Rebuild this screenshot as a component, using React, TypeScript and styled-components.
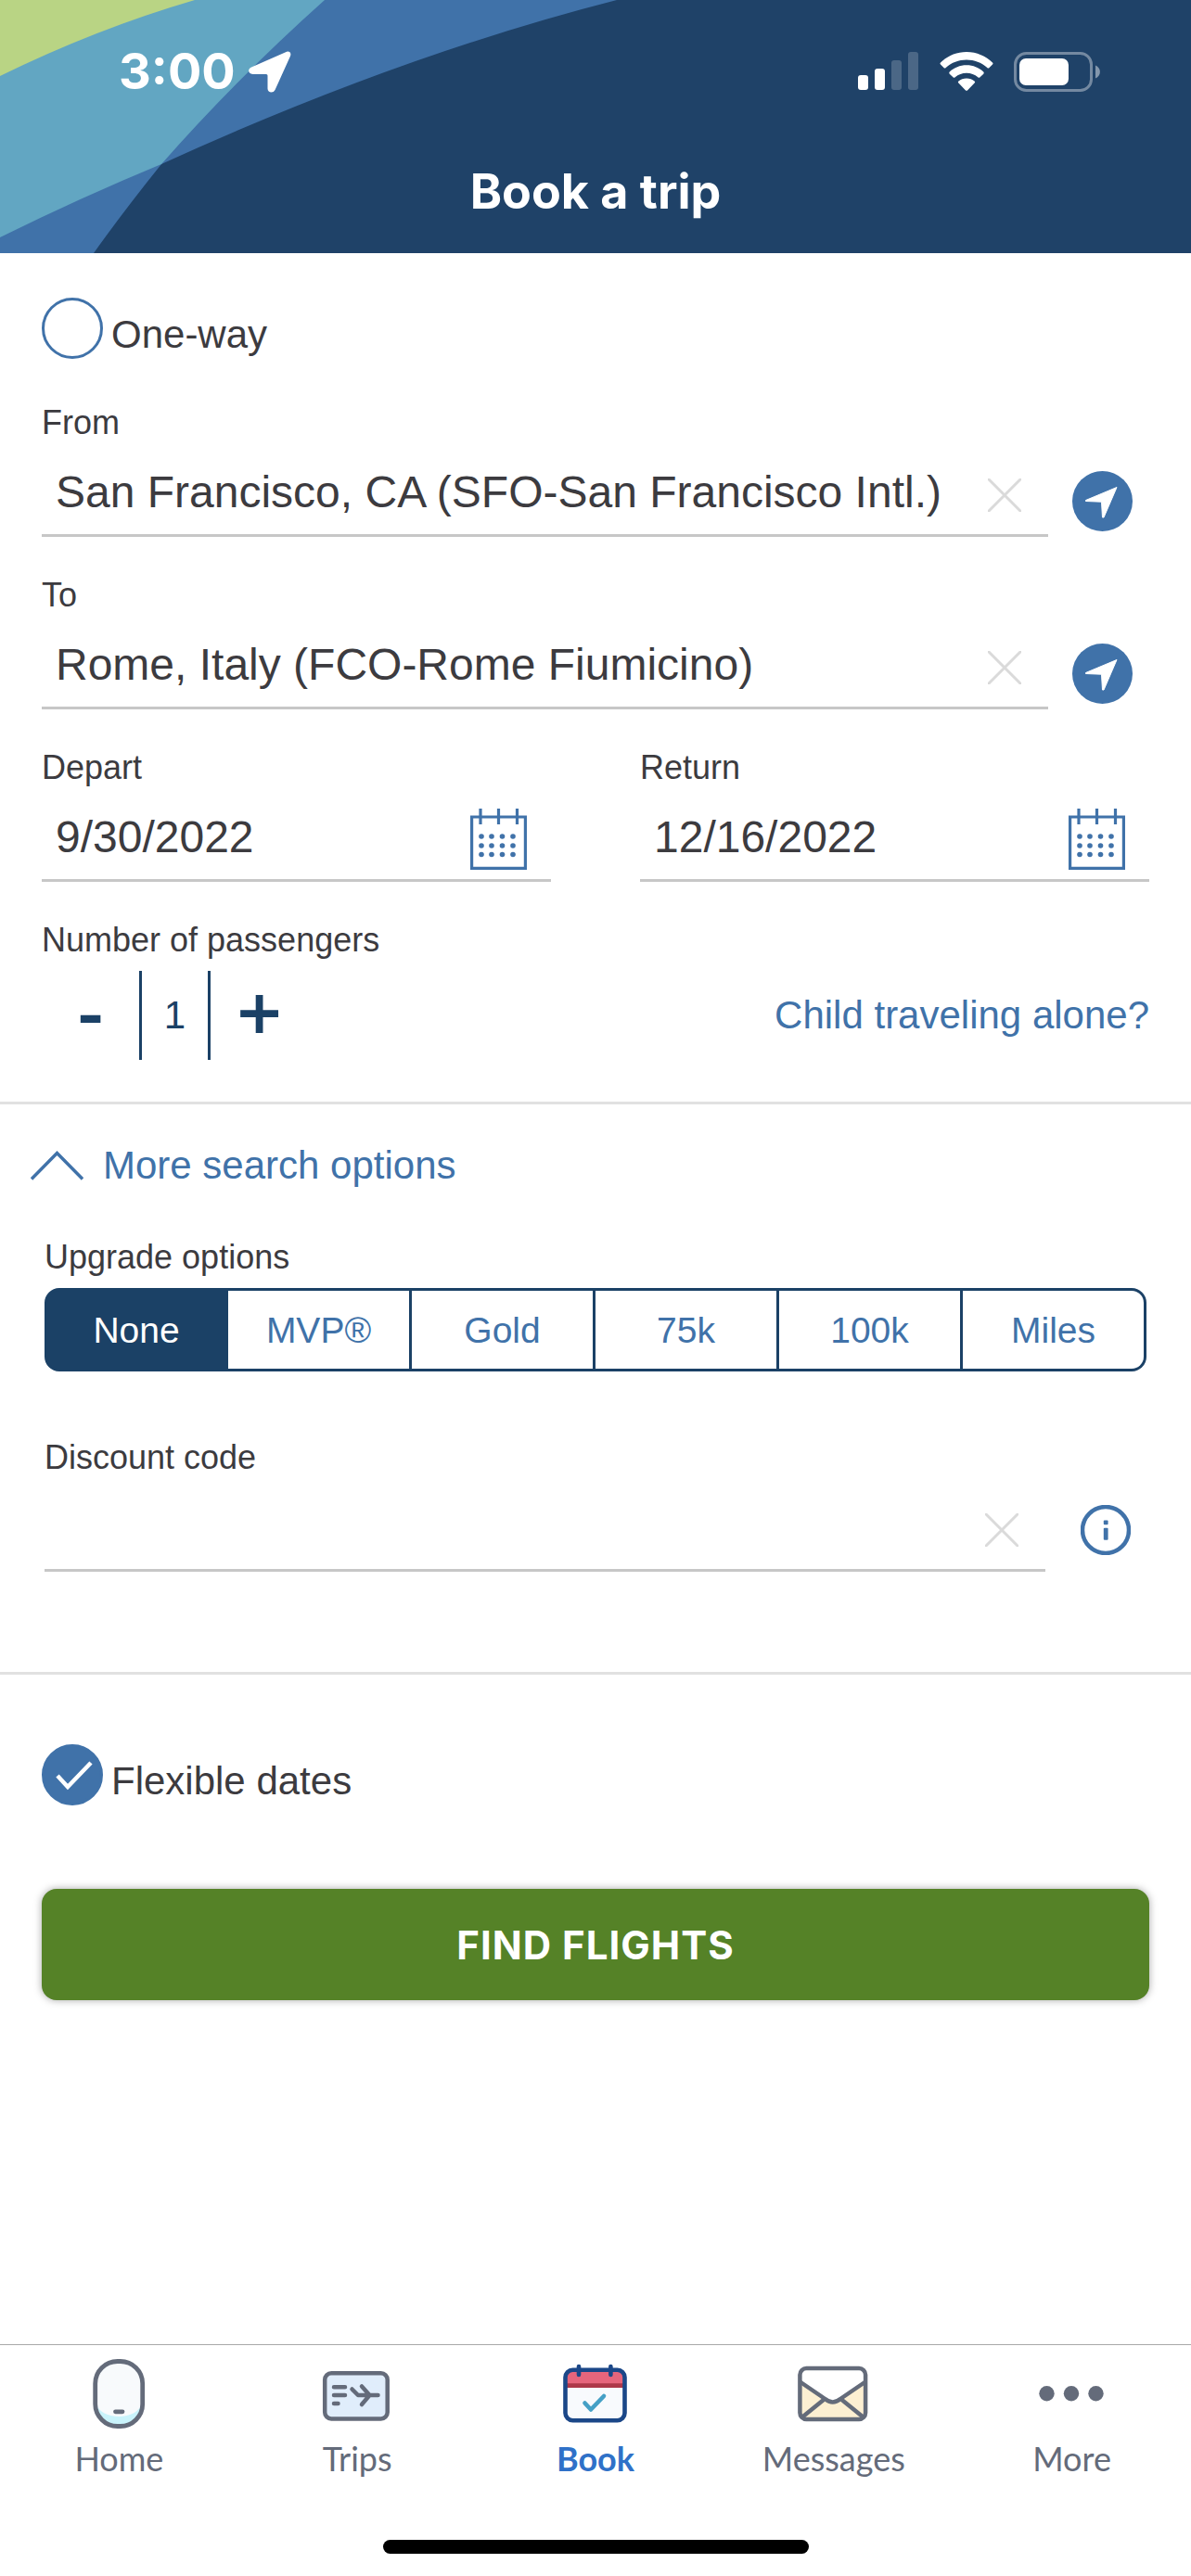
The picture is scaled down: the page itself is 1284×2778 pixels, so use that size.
import React, { useState } from "react";
import styled, { createGlobalStyle } from "styled-components";

const color = {
  navy: "#1f4268",
  deep: "#1b4166",
  blue: "#4072a9",
  teal: "#62a6c2",
  lime: "#b9d484",
  text: "#3c3b3f",
  line: "#c7c7c7",
  rule: "#e1e1e1",
  green: "#558227",
  slate: "#646b7a",
  active: "#2f71c8",
};

const sans = `"Liberation Sans", Arial, sans-serif`;
const ui = `Inter, Roboto, sans-serif`;
const geometric = `Lato, Inter, sans-serif`;

const GlobalStyle = createGlobalStyle`
  *, *::before, *::after { box-sizing: border-box; }
  body { margin: 0; background: #fff; color: ${color.text}; font-family: ${sans}; }
  button, input { font: inherit; color: inherit; }
  button { border: 0; padding: 0; background: none; cursor: pointer; }
  svg { display: block; flex: none; }
`;

const Page = styled.div`
  display: flex;
  flex-direction: column;
  min-height: 100vh;
`;

/* ---------- header ---------- */

const Header = styled.header`
  position: relative;
  height: 273px;
  overflow: hidden;
  background: ${color.navy};
  color: #fff;
  font-family: ${ui};
`;

const Swoosh = styled.svg`
  position: absolute;
  inset: 0 auto auto 0;
`;

const HeaderContent = styled.div`
  position: relative;
  display: flex;
  flex-direction: column;
`;

const StatusBar = styled.div`
  display: flex;
  align-items: center;
  justify-content: space-between;
  height: 154px;
  padding: 0 96px 0 128px;
`;

const StatusGroup = styled.div<{ $gap: number }>`
  display: flex;
  align-items: center;
  gap: ${(p) => p.$gap}px;
`;

const Clock = styled.time`
  font-size: 54px;
  line-height: 64px;
  font-weight: 700;
`;

const Title = styled.h1`
  margin: 0;
  padding-top: 22px;
  font-size: 52px;
  line-height: 62px;
  font-weight: 700;
  text-align: center;
`;

/* ---------- form ---------- */

const Form = styled.form`
  flex: 1;
`;

const TripSection = styled.section`
  padding: 48px 45px 45px;
  border-bottom: 3px solid ${color.rule};
`;

const OptionsSection = styled.section`
  padding: 42px 48px 108px;
  border-bottom: 3px solid ${color.rule};
`;

const SubmitSection = styled.section`
  padding: 75px 45px;
`;

const CheckLabel = styled.label`
  display: flex;
  align-items: center;
  gap: 9px;
  width: fit-content;
  font-size: 42px;
  line-height: 48px;
`;

const CheckText = styled.span`
  padding-top: 14px;
`;

const CheckBox = styled.span`
  display: grid;
  & > * {
    grid-area: 1 / 1;
  }
`;

const CheckInput = styled.input`
  appearance: none;
  width: 66px;
  height: 66px;
  margin: 0;
  border: 3px solid ${color.blue};
  border-radius: 50%;
  &:checked {
    background: ${color.blue};
  }
`;

const FieldStack = styled.div`
  display: flex;
  flex-direction: column;
  gap: 42px;
  margin-top: 48px;
`;

const FieldPair = styled.div`
  display: grid;
  grid-template-columns: 1fr 1fr;
  gap: 96px;
`;

const Field = styled.div`
  display: flex;
  flex-direction: column;
  min-width: 0;
`;

const FieldLabel = styled.label`
  font-size: 36px;
  line-height: 42px;
`;

const FieldRow = styled.div`
  display: flex;
  align-items: flex-end;
`;

const InputLine = styled.div<{ $end: number }>`
  flex: 1;
  min-width: 0;
  display: flex;
  align-items: flex-end;
  height: 102px;
  padding: 0 ${(p) => p.$end}px 0 15px;
  border-bottom: 3px solid ${color.line};
`;

const TextInput = styled.input`
  flex: 1;
  min-width: 0;
  height: 99px;
  padding: 8px 0 0;
  border: 0;
  outline: 0;
  background: transparent;
  font-size: 48px;
`;

const DateLine = styled(InputLine)`
  flex: none;
`;

const ClearButton = styled.button`
  margin-bottom: 24px;
`;

const CalendarButton = styled.button`
  margin-bottom: 10px;
`;

const LocateButton = styled.button`
  margin: 0 18px 6px 26px;
`;

const InfoButton = styled.button`
  margin: 0 17px 18px 38px;
`;

const PassengerRow = styled.div`
  display: flex;
  align-items: center;
  justify-content: space-between;
  margin-top: 12px;
  font-size: 42px;
`;

const Stepper = styled.div`
  display: flex;
  height: 96px;
  color: ${color.deep};
`;

const StepButton = styled.button`
  width: 105px;
  padding-bottom: 4px;
  font-size: 80px;
  line-height: 80px;
  -webkit-text-stroke: 2px ${color.deep};
`;

const StepValue = styled.output`
  display: grid;
  place-items: center;
  width: 77px;
  border: solid ${color.deep};
  border-width: 0 3px;
`;

const TextLink = styled.a`
  color: ${color.blue};
  text-decoration: none;
`;

const Disclosure = styled.button`
  display: flex;
  align-items: center;
  gap: 21px;
  margin-left: -15px;
  color: ${color.blue};
  font-size: 42px;
  line-height: 48px;
`;

const OptionGroup = styled.div`
  display: flex;
  flex-direction: column;
  gap: 12px;
  margin: 54px 0 72px;
`;

const Segments = styled.div`
  display: grid;
  grid-template-columns: repeat(6, 1fr);
  height: 90px;
`;

const Segment = styled.button<{ $on: boolean }>`
  padding-top: 2px;
  border: 3px solid ${color.deep};
  border-left-width: 0;
  background: ${(p) => (p.$on ? color.deep : "#fff")};
  color: ${(p) => (p.$on ? "#fff" : color.blue)};
  font-size: 39px;
  &:first-child {
    border-left-width: 3px;
    border-radius: 16px 0 0 16px;
  }
  &:last-child {
    border-radius: 0 16px 16px 0;
  }
`;

const SubmitButton = styled.button`
  width: 100%;
  height: 120px;
  margin-top: 90px;
  border-radius: 16px;
  background: ${color.green};
  box-shadow: 0 0 8px rgba(0, 0, 0, 0.35);
  color: #fff;
  font-family: ${ui};
  font-size: 42px;
  font-weight: 700;
  letter-spacing: 1px;
`;

/* ---------- tab bar ---------- */

const TabBar = styled.footer`
  border-top: 1px solid #a9a9a9;
  padding-bottom: 24px;
  font-family: ${geometric};
`;

const Tabs = styled.nav`
  display: grid;
  grid-template-columns: repeat(5, 1fr);
  padding: 15px 0 66px;
`;

const Tab = styled.a<{ $active?: boolean }>`
  display: flex;
  flex-direction: column;
  align-items: center;
  gap: 9px;
  color: ${(p) => (p.$active ? color.active : color.slate)};
  font-size: 36px;
  line-height: 44px;
  font-weight: ${(p) => (p.$active ? 700 : 400)};
  text-decoration: none;
`;

const HomeIndicator = styled.div`
  width: 459px;
  height: 15px;
  margin: 0 auto;
  border-radius: 8px;
  background: #000;
`;

/* ---------- icons ---------- */

const HeaderArt = () => (
  <Swoosh width="665" height="273" viewBox="0 0 665 273" aria-hidden="true">
    <path d="M0 0H665Q430 60 174 177Q87 213 0 256Z" fill={color.blue} />
    <path d="M0 0H350Q256 84 174 177Q133 228 101 273H0Z" fill={color.blue} />
    <path d="M0 0H350Q256 84 174 177Q87 213 0 256Z" fill={color.teal} />
    <path d="M0 0H210Q104 31 0 82Z" fill={color.lime} />
  </Swoosh>
);

const StatusArrow = () => (
  <svg width="46" height="45" viewBox="0 0 46 45" fill="#fff" aria-hidden="true">
    <path d="M40 1.200C43.500-.6 46.500 2 45 5.500L28.500 42C26.500 46 20.500 45 20.500 40.500V26.500Q20.500 25 19 25H4.500C-.5 25-1.500 19.500 3 17.500Z" />
  </svg>
);

const Signal = () => (
  <svg width="66" height="42" viewBox="0 0 66 42" fill="#fff" aria-hidden="true">
    <rect x="0" y="25" width="11" height="16" rx="3" />
    <rect x="18" y="18" width="11" height="23" rx="3" />
    <rect x="36" y="9" width="11" height="32" rx="3" opacity=".2" />
    <rect x="54" y="0" width="11" height="41" rx="3" opacity=".2" />
  </svg>
);

const Wifi = () => (
  <svg width="58" height="42" viewBox="0 0 58 42" fill="#fff" aria-hidden="true">
    <path d="M29 0C40 0 50 4.500 57 11.500Q58 12.500 57 13.600L53.500 17Q52.500 18 51.300 17C45 11.500 37.500 8.600 29 8.600S13 11.500 6.700 17Q5.500 18 4.500 17L1 13.600Q0 12.500 1 11.500C8 4.500 18 0 29 0Z" />
    <path d="M29 14.300C36 14.300 42.500 17 47.300 21.500Q48.300 22.600 47.300 23.700L43.500 27.300Q42.500 28.300 41.300 27.300C37.800 24.500 33.700 22.800 29 22.800S20.200 24.500 16.700 27.300Q15.500 28.300 14.500 27.300L10.700 23.700Q9.700 22.600 10.700 21.500C15.500 17 22 14.300 29 14.300Z" />
    <path d="M29 28.500C32.300 28.500 35.300 29.600 37.500 31.400Q38.700 32.500 37.600 33.600L30.200 41.200Q29 42.300 27.800 41.200L20.400 33.600Q19.300 32.500 20.500 31.400C22.700 29.600 25.700 28.500 29 28.500Z" />
  </svg>
);

const Battery = () => (
  <svg width="95" height="43" viewBox="0 0 95 43" fill="#fff" aria-hidden="true">
    <rect x="1.500" y="1.500" width="82" height="40" rx="12" fill="none" stroke="#fff" strokeWidth="3" opacity=".38" />
    <path d="M88 14.500C94.500 17 94.500 26 88 28.500Z" opacity=".45" />
    <rect x="6" y="7" width="53" height="29" rx="7" />
  </svg>
);

const CheckMark = () => (
  <svg width="66" height="66" viewBox="0 0 66 66" fill="none" stroke="#fff" strokeWidth="4.500" pointerEvents="none" aria-hidden="true">
    <path d="M17 34L28 46L53 20" />
  </svg>
);

const ClearIcon = () => (
  <svg width="36" height="36" viewBox="0 0 36 36" stroke="#dadada" strokeWidth="3" aria-hidden="true">
    <path d="M0 0L36 36M36 0L0 36" />
  </svg>
);

const LocateIcon = () => (
  <svg width="65" height="65" viewBox="0 0 65 65" aria-hidden="true">
    <circle cx="32.500" cy="32.500" r="32.500" fill={color.blue} />
    <path d="M14.500 31.500L48 17.500L34 50H32.500L31.500 33.200L14.500 32.500Z" fill="#fff" stroke="#fff" strokeLinejoin="round" />
  </svg>
);

const CalendarIcon = () => (
  <svg width="61" height="66" viewBox="0 0 61 66" fill="none" stroke={color.blue} strokeWidth="3.200" aria-hidden="true">
    <path d="M1.600 9H59.400V64.400H1.600ZM11 0V17M30.500 0V17M50.500 0V17" />
    {[30, 40, 49.5].map((y) =>
      [12, 23, 34.5, 46].map((x) => (
        <circle key={`${x}-${y}`} cx={x} cy={y} r="2.800" fill={color.blue} stroke="none" />
      ))
    )}
  </svg>
);

const ChevronIcon = () => (
  <svg width="57" height="32" viewBox="0 0 57 32" fill="none" stroke={color.blue} strokeWidth="3.500" aria-hidden="true">
    <path d="M1 30.500L28.500 2.500L56 30.500" />
  </svg>
);

const InfoIcon = () => (
  <svg width="54" height="54" viewBox="0 0 54 54" fill={color.blue} aria-hidden="true">
    <circle cx="27" cy="27" r="25" fill="none" stroke={color.blue} strokeWidth="4.500" />
    <rect x="24.800" y="16.500" width="4.800" height="4.800" rx="1" />
    <rect x="24.800" y="24.800" width="4.800" height="13" rx="1" />
  </svg>
);

const HomeIcon = () => (
  <svg width="96" height="76" viewBox="0 0 96 76" aria-hidden="true">
    <rect x="22.700" y="2.500" width="51" height="70" rx="24" fill="#c9f3fb" />
    <path d="M22.700 26.500A24 24 0 0 1 46.700 2.500H49.700A24 24 0 0 1 73.700 26.500V46C71 57 60 62 48.200 62S25.500 57 22.700 46Z" fill="#f8fafc" />
    <rect x="22.700" y="2.500" width="51" height="70" rx="24" fill="none" stroke={color.slate} strokeWidth="4.800" />
    <path d="M44.500 56.800H52" stroke={color.slate} strokeWidth="4.800" strokeLinecap="round" />
  </svg>
);

const TripsIcon = () => (
  <svg width="96" height="76" viewBox="0 0 96 76" fill="none" stroke={color.slate} strokeWidth="4.500" strokeLinecap="round" strokeLinejoin="round" aria-hidden="true">
    <rect x="13.200" y="15.300" width="67.500" height="49.200" rx="7" fill="#e0edfb" />
    <path d="M23 30.300H35M23 39H35M23 48H27.500" />
    <path d="M42.500 32.500L49 39H70.500M53 29.500L61.500 39L53 49" />
  </svg>
);

const BookIcon = () => (
  <svg width="96" height="76" viewBox="0 0 96 76" fill="none" strokeLinecap="round" strokeLinejoin="round" aria-hidden="true">
    <rect x="15.500" y="11.700" width="64" height="54.500" rx="8" fill="#f8fafd" />
    <path d="M15.500 27V19.700A8 8 0 0 1 23.500 11.700H71.500A8 8 0 0 1 79.500 19.700V27Z" fill="#e6657c" />
    <path d="M15.500 26.300H79.500V31H15.500Z" fill="#ad3849" />
    <rect x="15.500" y="11.700" width="64" height="54.500" rx="8" stroke="#1b4788" strokeWidth="4.600" />
    <path d="M30 8V17M64.400 8V17" stroke="#1b4788" strokeWidth="4.600" />
    <path d="M36.500 47.500L43 54.500L57 40" stroke="#45a0c6" strokeWidth="4.600" />
  </svg>
);

const MessagesIcon = () => (
  <svg width="96" height="76" viewBox="0 0 96 76" fill="none" stroke={color.slate} strokeWidth="4.500" strokeLinejoin="round" aria-hidden="true">
    <path d="M11.400 25L39 43.500Q46.700 49 54.500 43.500L82.100 25V58Q82.100 65 75 65H18.500Q11.400 65 11.400 58Z" fill="#fcefd2" stroke="none" />
    <rect x="11.400" y="10" width="70.700" height="55" rx="7" />
    <path d="M11.400 24.500L38.500 43Q46.700 50 55 43L82.100 24.500M13.500 63L37.500 43.500M80 63L56 43.500" />
  </svg>
);

const MoreIcon = () => (
  <svg width="96" height="76" viewBox="0 0 96 76" fill={color.slate} aria-hidden="true">
    <circle cx="20.500" cy="37.300" r="8.200" />
    <circle cx="47" cy="37.300" r="8.200" />
    <circle cx="73.500" cy="37.300" r="8.200" />
  </svg>
);

/* ---------- parts ---------- */

type CheckProps = { label: string; checked: boolean; onChange: (v: boolean) => void };

const Check = ({ label, checked, onChange }: CheckProps) => (
  <CheckLabel>
    <CheckBox>
      <CheckInput type="checkbox" checked={checked} onChange={(e) => onChange(e.target.checked)} />
      {checked && <CheckMark />}
    </CheckBox>
    <CheckText>{label}</CheckText>
  </CheckLabel>
);

type TextFieldProps = { id: string; label: string; initial: string; action: React.ReactNode };

const ClearableField = ({ id, label, initial, action }: TextFieldProps) => {
  const [value, setValue] = useState(initial);
  return (
    <Field>
      <FieldLabel htmlFor={id}>{label}</FieldLabel>
      <FieldRow>
        <InputLine $end={29}>
          <TextInput id={id} type="text" value={value} onChange={(e) => setValue(e.target.value)} />
          <ClearButton type="button" aria-label={`Clear ${label}`} onClick={() => setValue("")}>
            <ClearIcon />
          </ClearButton>
        </InputLine>
        {action}
      </FieldRow>
    </Field>
  );
};

const DateField = ({ id, label, initial }: { id: string; label: string; initial: string }) => (
  <Field>
    <FieldLabel htmlFor={id}>{label}</FieldLabel>
    <DateLine $end={26}>
      <TextInput id={id} type="text" defaultValue={initial} />
      <CalendarButton type="button" aria-label={`Choose ${label} date`}>
        <CalendarIcon />
      </CalendarButton>
    </DateLine>
  </Field>
);

const Locate = () => (
  <LocateButton type="button" aria-label="Use current location">
    <LocateIcon />
  </LocateButton>
);

const upgrades = ["None", "MVP®", "Gold", "75k", "100k", "Miles"];

const tabs = [
  { name: "Home", Icon: HomeIcon },
  { name: "Trips", Icon: TripsIcon },
  { name: "Book", Icon: BookIcon },
  { name: "Messages", Icon: MessagesIcon },
  { name: "More", Icon: MoreIcon },
];

export default function App() {
  const [oneWay, setOneWay] = useState(false);
  const [flexible, setFlexible] = useState(true);
  const [passengers, setPassengers] = useState(1);
  const [expanded, setExpanded] = useState(true);
  const [upgrade, setUpgrade] = useState("None");

  return (
    <Page>
      <GlobalStyle />
      <Header>
        <HeaderArt />
        <HeaderContent>
          <StatusBar>
            <StatusGroup $gap={14}>
              <Clock>3:00</Clock>
              <StatusArrow />
            </StatusGroup>
            <StatusGroup $gap={22}>
              <Signal />
              <Wifi />
              <Battery />
            </StatusGroup>
          </StatusBar>
          <Title>Book a trip</Title>
        </HeaderContent>
      </Header>

      <Form onSubmit={(e) => e.preventDefault()}>
        <TripSection>
          <Check label="One-way" checked={oneWay} onChange={setOneWay} />
          <FieldStack>
            <ClearableField id="from" label="From" initial="San Francisco, CA (SFO-San Francisco Intl.)" action={<Locate />} />
            <ClearableField id="to" label="To" initial="Rome, Italy (FCO-Rome Fiumicino)" action={<Locate />} />
            <FieldPair>
              <DateField id="depart" label="Depart" initial="9/30/2022" />
              <DateField id="return" label="Return" initial="12/16/2022" />
            </FieldPair>
            <Field>
              <FieldLabel htmlFor="passengers">Number of passengers</FieldLabel>
              <PassengerRow>
                <Stepper>
                  <StepButton type="button" aria-label="Fewer passengers" onClick={() => setPassengers(Math.max(1, passengers - 1))}>
                    -
                  </StepButton>
                  <StepValue id="passengers">{passengers}</StepValue>
                  <StepButton type="button" aria-label="More passengers" onClick={() => setPassengers(passengers + 1)}>
                    +
                  </StepButton>
                </Stepper>
                <TextLink href="#child">Child traveling alone?</TextLink>
              </PassengerRow>
            </Field>
          </FieldStack>
        </TripSection>

        <OptionsSection>
          <Disclosure type="button" aria-expanded={expanded} onClick={() => setExpanded(!expanded)}>
            <ChevronIcon />
            More search options
          </Disclosure>
          {expanded && (
            <>
              <OptionGroup>
                <FieldLabel as="span" id="upgrade-label">Upgrade options</FieldLabel>
                <Segments role="group" aria-labelledby="upgrade-label">
                  {upgrades.map((u) => (
                    <Segment key={u} type="button" $on={u === upgrade} aria-pressed={u === upgrade} onClick={() => setUpgrade(u)}>
                      {u}
                    </Segment>
                  ))}
                </Segments>
              </OptionGroup>
              <ClearableField
                id="discount"
                label="Discount code"
                initial=""
                action={
                  <InfoButton type="button" aria-label="About discount codes">
                    <InfoIcon />
                  </InfoButton>
                }
              />
            </>
          )}
        </OptionsSection>

        <SubmitSection>
          <Check label="Flexible dates" checked={flexible} onChange={setFlexible} />
          <SubmitButton type="submit">FIND FLIGHTS</SubmitButton>
        </SubmitSection>
      </Form>

      <TabBar>
        <Tabs>
          {tabs.map(({ name, Icon }) => (
            <Tab key={name} href={`#${name.toLowerCase()}`} $active={name === "Book"} aria-current={name === "Book" ? "page" : undefined}>
              <Icon />
              {name}
            </Tab>
          ))}
        </Tabs>
        <HomeIndicator />
      </TabBar>
    </Page>
  );
}
